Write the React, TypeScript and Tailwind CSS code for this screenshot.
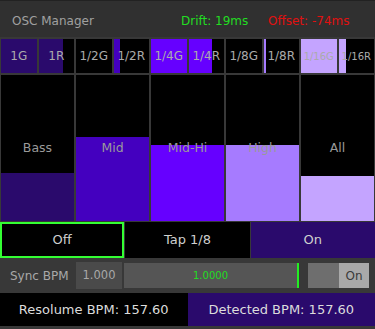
import React from 'react'

// ─── Data ─────────────────────────────────────────────────────────────────────

type Tab = { label: string; fill: number; colour: string; small?: boolean }

const tabs: Tab[] = [
  { label: '1G', fill: 1, colour: '#2a0a6c' },
  { label: '1R', fill: 0.7, colour: '#2a0a6c' },
  { label: '1/2G', fill: 0, colour: '#4400bf' },
  { label: '1/2R', fill: 0.17, colour: '#4400bf' },
  { label: '1/4G', fill: 1, colour: '#6600ff' },
  { label: '1/4R', fill: 0.65, colour: '#6600ff' },
  { label: '1/8G', fill: 0, colour: '#a67bff' },
  { label: '1/8R', fill: 0.06, colour: '#a67bff' },
  { label: '1/16G', fill: 1, colour: '#c4a4ff', small: true },
  { label: '1/16R', fill: 0.2, colour: '#c4a4ff', small: true },
]

type Band = { label: string; level: number; colour: string }

const bands: Band[] = [
  { label: 'Bass', level: 0.33, colour: '#2a0a6c' },
  { label: 'Mid', level: 0.575, colour: '#4400bf' },
  { label: 'Mid-Hi', level: 0.52, colour: '#6600ff' },
  { label: 'High', level: 0.52, colour: '#a67bff' },
  { label: 'All', level: 0.31, colour: '#c4a4ff' },
]

// ─── Pieces ──────────────────────────────────────────────────────────────────

function TabCell({ tab }: { tab: Tab }) {
  return (
    <div className="relative flex h-[34px] items-center justify-center bg-black">
      <div className="absolute inset-y-0 left-0" style={{ width: `${tab.fill * 100}%`, background: tab.colour }} />
      <span className={`relative text-[#ababab] ${tab.small ? 'text-[10px]' : 'text-[12px]'}`}>{tab.label}</span>
    </div>
  )
}

function BandColumn({ band }: { band: Band }) {
  return (
    <div className="relative flex h-[146px] items-center justify-center bg-black">
      <div className="absolute inset-x-0 bottom-0" style={{ height: `${band.level * 100}%`, background: band.colour }} />
      <span className="relative text-[12.5px] text-[#9a9a9a]">{band.label}</span>
    </div>
  )
}

// ─── Main ────────────────────────────────────────────────────────────────────

export default function App() {
  return (
    <div className="h-[329px] w-[375px] overflow-hidden bg-[#383838] font-['DejaVu_Sans',sans-serif]">
      {/* Header */}
      <div className="flex h-[37px] items-center border-t border-[#222] bg-[#303030] pl-3 pt-[3px] text-[12px]">
        <span className="w-[169px] text-[#a0a0a0]">OSC Manager</span>
        <span className="w-[87px] text-[#22dd22]">Drift: 19ms</span>
        <span className="text-[#e01010]">Offset: -74ms</span>
      </div>

      {/* Subdivision tabs */}
      <div className="mt-[2px] grid grid-cols-10 gap-[2px] px-px">
        {tabs.map((t) => <TabCell key={t.label} tab={t} />)}
      </div>

      {/* Bands */}
      <div className="mt-[2px] grid grid-cols-5 gap-[2px] px-px">
        {bands.map((b) => <BandColumn key={b.label} band={b} />)}
      </div>

      {/* Mode buttons */}
      <div className="mt-px grid h-[36px] grid-cols-3 gap-px text-[13px] text-[#cfcfcf]">
        <div className="flex items-center justify-center border-2 border-[#33ff33] bg-black">Off</div>
        <div className="flex items-center justify-center bg-black">Tap 1/8</div>
        <div className="flex items-center justify-center bg-[#2a0a6c]">On</div>
      </div>

      {/* Sync row */}
      <div className="flex h-[35px] items-center pl-[10px] text-[12px]">
        <span className="w-[66px] text-[#a8a8a8]">Sync BPM</span>
        <div className="flex h-[27px] w-[46px] items-center justify-center bg-[#4a4a4a] text-[11.5px] text-[#a8a8a8]">1.000</div>
        <div className="ml-[2px] flex h-[25px] w-[175px] items-center justify-center border-r-2 border-[#22ee22] bg-[#555555] text-[10px] text-[#22dd22]">
          1.0000
        </div>
        <div className="ml-[9px] flex h-[25px] w-[61px]">
          <div className="flex-1 bg-[#6e6e6e]" />
          <div className="flex w-[30px] items-center justify-center bg-[#a9a9a9] text-[#3a3a3a]">On</div>
        </div>
      </div>

      {/* BPM readouts */}
      <div className="grid h-[33px] grid-cols-2 text-[13px] text-[#dcdcdc]">
        <div className="flex items-center justify-center bg-black">Resolume BPM: 157.60</div>
        <div className="flex items-center justify-center bg-[#2a0a6c]">Detected BPM: 157.60</div>
      </div>
    </div>
  )
}
